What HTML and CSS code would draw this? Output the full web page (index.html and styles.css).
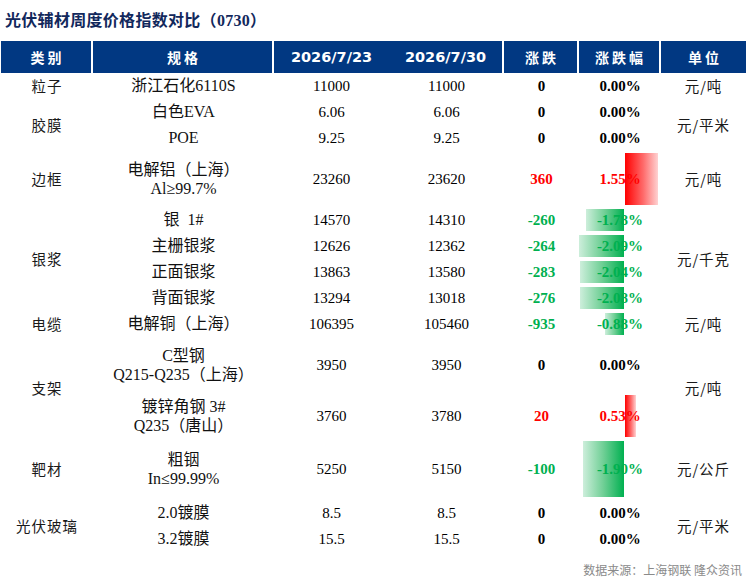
FILE: index.html
```html
<!DOCTYPE html>
<html lang="zh-CN">
<head>
<meta charset="utf-8">
<title>光伏辅材周度价格指数对比</title>
<link rel="stylesheet" href="styles.css">
</head>
<body>
<div class="title">光伏辅材周度价格指数对比（0730）</div>
<table class="grid">
  <colgroup>
    <col class="c1"><col class="c2"><col class="c3"><col class="c4"><col class="c5"><col class="c6"><col class="c7">
  </colgroup>
  <thead>
    <tr class="head">
      <th class="cn">类别</th>
      <th class="cn">规格</th>
      <th class="date nosep">2026/7/23</th>
      <th class="date">2026/7/30</th>
      <th class="cn">涨跌</th>
      <th class="cn">涨跌幅</th>
      <th class="cn last">单位</th>
    </tr>
  </thead>
  <tbody>
    <tr class="h26">
      <td class="cat">粒子</td><td class="spec">浙江石化6110S</td><td>11000</td><td>11000</td>
      <td class="chg">0</td><td class="pct"><span class="v">0.00%</span></td><td class="unit">元/吨</td>
    </tr>
    <tr class="h26">
      <td class="cat" rowspan="2">胶膜</td><td class="spec">白色EVA</td><td>6.06</td><td>6.06</td>
      <td class="chg">0</td><td class="pct"><span class="v">0.00%</span></td><td class="unit" rowspan="2">元/平米</td>
    </tr>
    <tr class="h26">
      <td class="spec">POE</td><td>9.25</td><td>9.25</td>
      <td class="chg">0</td><td class="pct"><span class="v">0.00%</span></td>
    </tr>
    <tr class="h56">
      <td class="cat">边框</td><td class="spec two">电解铝（上海）<br>Al≥99.7%</td><td>23260</td><td>23620</td>
      <td class="chg up">360</td><td class="pct up"><i class="bar pos" style="width:33px"></i><span class="v">1.55%</span></td><td class="unit">元/吨</td>
    </tr>
    <tr class="h26">
      <td class="cat" rowspan="4">银浆</td><td class="spec">银&nbsp;&nbsp;1#</td><td>14570</td><td>14310</td>
      <td class="chg dn">-260</td><td class="pct dn"><i class="bar neg" style="width:38px"></i><span class="v">-1.78%</span></td><td class="unit" rowspan="4">元/千克</td>
    </tr>
    <tr class="h26">
      <td class="spec">主栅银浆</td><td>12626</td><td>12362</td>
      <td class="chg dn">-264</td><td class="pct dn"><i class="bar neg" style="width:45px"></i><span class="v">-2.09%</span></td>
    </tr>
    <tr class="h26">
      <td class="spec">正面银浆</td><td>13863</td><td>13580</td>
      <td class="chg dn">-283</td><td class="pct dn"><i class="bar neg" style="width:44px"></i><span class="v">-2.04%</span></td>
    </tr>
    <tr class="h26">
      <td class="spec">背面银浆</td><td>13294</td><td>13018</td>
      <td class="chg dn">-276</td><td class="pct dn"><i class="bar neg" style="width:44px"></i><span class="v">-2.08%</span></td>
    </tr>
    <tr class="h26">
      <td class="cat">电缆</td><td class="spec">电解铜（上海）</td><td>106395</td><td>105460</td>
      <td class="chg dn">-935</td><td class="pct dn"><i class="bar neg" style="width:19px"></i><span class="v">-0.88%</span></td><td class="unit">元/吨</td>
    </tr>
    <tr class="h56">
      <td class="cat" rowspan="2">支架</td><td class="spec two">C型钢<br>Q215-Q235（上海）</td><td>3950</td><td>3950</td>
      <td class="chg">0</td><td class="pct"><span class="v">0.00%</span></td><td class="unit" rowspan="2">元/吨</td>
    </tr>
    <tr class="h46">
      <td class="spec two">镀锌角钢&nbsp;3#<br>Q235（唐山）</td><td>3760</td><td>3780</td>
      <td class="chg up">20</td><td class="pct up"><i class="bar pos" style="width:11px"></i><span class="v">0.53%</span></td>
    </tr>
    <tr class="h60">
      <td class="cat">靶材</td><td class="spec two">粗铟<br>In≤99.99%</td><td>5250</td><td>5150</td>
      <td class="chg dn">-100</td><td class="pct dn"><i class="bar neg" style="width:41px"></i><span class="v">-1.90%</span></td><td class="unit">元/公斤</td>
    </tr>
    <tr class="h27">
      <td class="cat" rowspan="2">光伏玻璃</td><td class="spec">2.0镀膜</td><td>8.5</td><td>8.5</td>
      <td class="chg">0</td><td class="pct"><span class="v">0.00%</span></td><td class="unit" rowspan="2">元/平米</td>
    </tr>
    <tr class="h26">
      <td class="spec">3.2镀膜</td><td>15.5</td><td>15.5</td>
      <td class="chg">0</td><td class="pct"><span class="v">0.00%</span></td>
    </tr>
  </tbody>
</table>
<div class="source">数据来源：上海钢联&nbsp;隆众资讯</div>
</body>
</html>
```

FILE: styles.css
```css
html, body {
  margin: 0;
  padding: 0;
  background: #ffffff;
}

body {
  width: 746px;
  height: 578px;
  overflow: hidden;
  font-family: "Liberation Serif", "Noto Sans CJK SC", serif;
  color: #000000;
}

.title {
  height: 41px;
  line-height: 41px;
  padding-left: 5px;
  font-size: 16px;
  font-weight: bold;
  color: #12285c;
  letter-spacing: 0.3px;
}

.grid {
  margin-left: 1px;
  width: 745px;
  table-layout: fixed;
  border-collapse: separate;
  border-spacing: 0;
}

.c1 { width: 92px; }
.c2 { width: 181px; }
.c3 { width: 115px; }
.c4 { width: 115px; }
.c5 { width: 75px; }
.c6 { width: 82px; }
.c7 { width: 85px; }

.head th {
  height: 32px;
  padding: 0;
  background: #013882;
  color: #ffffff;
  font-weight: bold;
  text-align: center;
  border-right: 2px solid #ffffff;
}

.head th.nosep,
.head th.last {
  border-right: none;
}

.head th.cn {
  font-family: "Noto Sans CJK SC", sans-serif;
  font-size: 14px;
  letter-spacing: 3px;
  text-indent: 3px;
}

.head th.date {
  font-family: "DejaVu Sans", sans-serif;
  font-size: 14.5px;
}

.grid td {
  padding: 0;
  text-align: center;
  vertical-align: middle;
  font-size: 15px;
  line-height: 20px;
  white-space: nowrap;
}

.grid td.spec {
  font-size: 16px;
  color: #111111;
}

.grid td.cat,
.grid td.unit {
  font-family: "Noto Sans CJK SC", sans-serif;
  font-size: 14.5px;
  letter-spacing: 1px;
  color: #1a1a1a;
}

.h26 { height: 26px; }
.h27 { height: 27px; }
.h46 { height: 46px; }
.h56 { height: 56px; }
.h60 { height: 60px; }

.grid td.two {
  line-height: 19px;
}

.grid td.chg,
.grid td.pct {
  font-weight: bold;
}

.up { color: #ff0000; }
.dn { color: #00b050; }

.grid td.pct {
  position: relative;
}

.pct .v {
  position: relative;
  z-index: 1;
}

.bar {
  position: absolute;
  top: 2px;
  bottom: 2px;
  display: block;
}

.bar.pos {
  left: 46px;
  background: linear-gradient(to right, #ff0000 0%, #ff6a6a 55%, #ffd2d2 100%);
}

.bar.neg {
  right: 37px;
  background: linear-gradient(to left, #00b050 0%, #6fcf95 50%, #cdeedb 100%);
}

.source {
  margin-top: 9px;
  padding-right: 4px;
  text-align: right;
  font-family: "Noto Sans CJK SC", sans-serif;
  font-size: 12px;
  line-height: 18px;
  color: #8a8a8a;
}
```
